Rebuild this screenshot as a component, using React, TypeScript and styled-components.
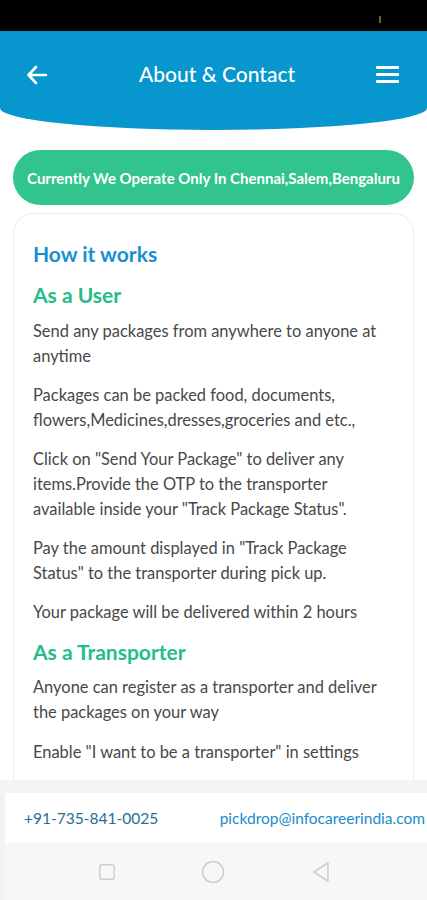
import React from "react";
import styled, { createGlobalStyle } from "styled-components";

const Global = createGlobalStyle`
  html, body { margin: 0; padding: 0; }
  body { width: 427px; height: 900px; overflow: hidden; font-family: Lato, "Open Sans", sans-serif; background: #fff; }
  * { box-sizing: border-box; }
`;

const Screen = styled.div`
  width: 427px;
  height: 900px;
  display: flex;
  flex-direction: column;
  background: #fff;
`;

const StatusBar = styled.div`
  height: 31px;
  flex: none;
  background: #000;
  position: relative;
`;

const StatusDot = styled.span`
  position: absolute;
  left: 379px;
  top: 16px;
  width: 2px;
  height: 7px;
  background: #6b6420;
`;

const Header = styled.header`
  flex: none;
  height: 99px;
  background: #0896cf;
  border-bottom-left-radius: 50% 22px;
  border-bottom-right-radius: 50% 22px;
  display: flex;
  align-items: center;
  justify-content: space-between;
  padding: 0 28px 12px 25px;
  color: #fff;
`;

const IconBtn = styled.div`
  width: 24px;
  height: 24px;
  display: flex;
  align-items: center;
  justify-content: center;
`;

const Title = styled.h1`
  margin: 0 0 2px 10px;
  font-size: 21px;
  font-weight: 500;
  line-height: 28px;
  color: #fff;
`;

const Content = styled.main`
  flex: 1;
  overflow: hidden;
  padding: 20px 13px 0;
  display: flex;
  flex-direction: column;
  gap: 8px;
`;

const Banner = styled.div`
  flex: none;
  height: 55px;
  border-radius: 28px;
  background: #31c48d;
  color: #fff;
  font-size: 15px;
  font-weight: 700;
  display: flex;
  align-items: center;
  justify-content: center;
  white-space: nowrap;
`;

const Card = styled.section`
  flex: none;
  border: 1px solid #ececec;
  border-radius: 20px;
  padding: 25px 30px 40px 19px;
`;

const Heading = styled.h2<{ $tone: "blue" | "green"; $gap: number }>`
  margin: 2px 0 ${(p) => p.$gap}px;
  font-size: 21px;
  font-weight: 700;
  line-height: 26px;
  color: ${(p) => (p.$tone === "blue" ? "#1a8fd0" : "#24bd85")};
`;

const Para = styled.p`
  margin: 0 0 14.5px;
  font-size: 16.45px;
  line-height: 24.8px;
  color: #484848;
`;

const Bottom = styled.div`
  flex: none;
  background: #f3f3f3;
  padding-top: 13px;
  padding-left: 5px;
`;

const Footer = styled.footer`
  height: 50px;
  background: #fff;
  display: flex;
  align-items: center;
  justify-content: space-between;
  padding: 0 2px 0 19px;
  font-size: 15.5px;
  white-space: nowrap;
`;

const Phone = styled.span`
  color: #246f96;
`;

const Email = styled.span`
  color: #1a8bcb;
`;

const NavBar = styled.nav`
  height: 57px;
  background: #f7f7f7;
  display: flex;
  align-items: center;
  justify-content: center;
  gap: 86px;
  padding-right: 2px;
`;

export default function App() {
  return (
    <Screen>
      <Global />
      <StatusBar>
        <StatusDot />
      </StatusBar>
      <Header>
        <IconBtn>
          <svg width="22" height="20" viewBox="0 0 22 20" fill="none" stroke="#fff" strokeWidth="2.6" strokeLinecap="round" strokeLinejoin="round">
            <path d="M20 10H3M10 2L2.5 10L10 18" />
          </svg>
        </IconBtn>
        <Title>About &amp; Contact</Title>
        <IconBtn>
          <svg width="23" height="17" viewBox="0 0 23 17" fill="#fff">
            <rect x="0" y="0" width="23" height="3" rx="1" />
            <rect x="0" y="7" width="23" height="3" rx="1" />
            <rect x="0" y="14" width="23" height="3" rx="1" />
          </svg>
        </IconBtn>
      </Header>
      <Content>
        <Banner>Currently We Operate Only In Chennai,Salem,Bengaluru</Banner>
        <Card>
          <Heading $tone="blue" $gap={15}>How it works</Heading>
          <Heading $tone="green" $gap={11}>As a User</Heading>
          <Para>Send any packages from anywhere to anyone at anytime</Para>
          <Para>Packages can be packed food, documents, flowers,Medicines,dresses,groceries and etc.,</Para>
          <Para>Click on "Send Your Package" to deliver any items.Provide the OTP to the transporter available inside your "Track Package Status".</Para>
          <Para>Pay the amount displayed in "Track Package Status" to the transporter during pick up.</Para>
          <Para>Your package will be delivered within 2 hours</Para>
          <Heading $tone="green" $gap={10}>As a Transporter</Heading>
          <Para>Anyone can register as a transporter and deliver the packages on your way</Para>
          <Para>Enable "I want to be a transporter" in settings</Para>
        </Card>
      </Content>
      <Bottom>
        <Footer>
          <Phone>+91-735-841-0025</Phone>
          <Email>pickdrop@infocareerindia.com</Email>
        </Footer>
        <NavBar>
          <svg width="16" height="16" viewBox="0 0 16 16" fill="none" stroke="#cfcfcf" strokeWidth="1.6">
            <rect x="0.8" y="0.8" width="14.4" height="14.4" rx="2" />
          </svg>
          <svg width="24" height="24" viewBox="0 0 24 24" fill="none" stroke="#cfcfcf" strokeWidth="1.6">
            <circle cx="12" cy="12" r="10.5" />
          </svg>
          <svg width="20" height="22" viewBox="0 0 20 22" fill="none" stroke="#cfcfcf" strokeWidth="1.6" strokeLinejoin="round">
            <path d="M17 2L3 11L17 20Z" />
          </svg>
        </NavBar>
      </Bottom>
    </Screen>
  );
}
